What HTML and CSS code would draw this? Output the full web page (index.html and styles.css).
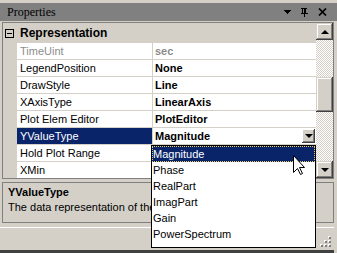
FILE: index.html
```html
<!DOCTYPE html>
<html>
  <head>
    <title>Properties</title>
    <meta name="viewport" content="width=device-width, initial-scale=1.0" />
    <link rel="stylesheet" href="styles.css">
  </head>
  <body>
    <div class="panel">
      <div class="titlebar">
        <span class="title">Properties</span>
        <span class="tools">
          <svg width="7" height="4" viewBox="0 0 7 4" shape-rendering="crispEdges"><path d="M0 0h7v1h-1v1h-1v1h-1v1h-1v-1h-1v-1h-1v-1h-1z" fill="#000"/></svg>
          <svg width="7" height="9" viewBox="0 0 7 9" shape-rendering="crispEdges"><path d="M1 0h5v1h-1v4h2v1h-3v3h-1v-3h-3v-1h1v-4h-1v-1h1zM2 1v4h1v-4z" fill="#000" fill-rule="evenodd"/></svg>
          <svg width="9" height="8" viewBox="0 0 9 8"><path d="M1 0.5L8 7.5M8 0.5L1 7.5" stroke="#000" stroke-width="1.7"/></svg>
        </span>
      </div>
      <div class="grid">
        <div class="rows">
          <div class="cat"><span class="toggle"></span>Representation</div>
          <div class="row readonly"><div class="name">TimeUint</div><div class="value">sec</div></div>
          <div class="row"><div class="name">LegendPosition</div><div class="value">None</div></div>
          <div class="row"><div class="name">DrawStyle</div><div class="value">Line</div></div>
          <div class="row"><div class="name">XAxisType</div><div class="value">LinearAxis</div></div>
          <div class="row"><div class="name">Plot Elem Editor</div><div class="value">PlotEditor</div></div>
          <div class="row selected">
            <div class="name">YValueType</div>
            <div class="value">Magnitude<span class="drop-btn"><i class="arrow down"></i></span></div>
          </div>
          <div class="row"><div class="name">Hold Plot Range</div><div class="value"></div></div>
          <div class="row"><div class="name">XMin</div><div class="value"></div></div>
        </div>
        <div class="vscroll">
          <div class="sbtn"><i class="arrow up"></i></div>
          <div class="track"><div class="thumb"></div></div>
          <div class="sbtn"><i class="arrow down"></i></div>
        </div>
      </div>
      <div class="desc">
        <h3>YValueType</h3>
        <p>The data representation of the Y value.</p>
      </div>
      <div class="status">
        <svg class="grip" width="12" height="12" viewBox="0 0 12 12" shape-rendering="crispEdges">
          <g fill="#fff"><rect x="8" y="0" width="2" height="2"/><rect x="4" y="4" width="2" height="2"/><rect x="8" y="4" width="2" height="2"/><rect x="0" y="8" width="2" height="2"/><rect x="4" y="8" width="2" height="2"/><rect x="8" y="8" width="2" height="2"/></g>
          <g fill="#808080"><rect x="9" y="1" width="2" height="2"/><rect x="5" y="5" width="2" height="2"/><rect x="9" y="5" width="2" height="2"/><rect x="1" y="9" width="2" height="2"/><rect x="5" y="9" width="2" height="2"/><rect x="9" y="9" width="2" height="2"/></g>
        </svg>
      </div>

      <ul class="dropdown">
        <li class="sel">Magnitude</li>
        <li>Phase</li>
        <li>RealPart</li>
        <li>ImagPart</li>
        <li>Gain</li>
        <li>PowerSpectrum</li>
      </ul>

      <svg class="cursor" width="13" height="21" viewBox="0 0 13 21">
        <path d="M0.5 0.5V17.5L4.5 13.5L7.5 19.5L9.5 18.5L6.5 12.5L11.5 12.5Z" fill="#fff" stroke="#000" stroke-width="1"/>
      </svg>
    </div>
  </body>
</html>
```

FILE: styles.css
```css
* {
  box-sizing: border-box;
}
body {
  margin: 0;
  background: #d4d0c8;
  font-family: "Liberation Sans", Arial, sans-serif;
  font-size: 11px;
  color: #000;
  overflow: hidden;
}
.panel {
  position: relative;
  width: 337px;
  height: 253px;
  padding-top: 3px;
  overflow: hidden;
}
.titlebar {
  display: flex;
  align-items: center;
  height: 18px;
  margin-bottom: 1px;
  padding: 0 10px 0 7px;
  background: #808080;
}
.title {
  flex: 1;
  font-family: "Liberation Serif", "Times New Roman", serif;
  font-size: 12px;
  padding-top: 1px;
}
.tools {
  display: flex;
  align-items: center;
  gap: 10px;
}
.tools svg {
  display: block;
}
.grid {
  display: flex;
  width: 332px;
  height: 157px;
  margin-left: 2px;
  border: 1px solid #808080;
}
.rows {
  width: 313px;
  height: 155px;
  overflow: hidden;
}
.cat {
  display: flex;
  align-items: center;
  height: 20px;
  font-size: 12px;
  font-weight: bold;
}
.toggle {
  display: flex;
  align-items: center;
  justify-content: center;
  width: 9px;
  height: 9px;
  margin: 0 6px 0 2px;
  border: 1px solid #000;
}
.toggle::after {
  content: "";
  width: 5px;
  height: 1px;
  background: #000;
}
.row {
  display: flex;
  height: 17px;
  border-bottom: 1px solid #d4d0c8;
  line-height: 16px;
}
.name {
  width: 136px;
  margin-left: 14px;
  padding-left: 3px;
  background: #fff;
  border-right: 1px solid #d4d0c8;
  white-space: nowrap;
}
.value {
  display: flex;
  align-items: center;
  flex: 1;
  padding-left: 2px;
  background: #fff;
  font-weight: bold;
}
.readonly .name,
.readonly .value {
  color: #8c8c8c;
}
.selected .name {
  background: #0a246a;
  color: #fff;
}
.drop-btn {
  display: flex;
  align-items: center;
  justify-content: center;
  width: 13px;
  height: 14px;
  margin-left: auto;
  margin-right: 1px;
  background: #d4d0c8;
  box-shadow: inset -1px -1px #404040, inset 1px 1px #fff, inset -2px -2px #808080;
}
.arrow {
  width: 0;
  height: 0;
  border-left: 4px solid transparent;
  border-right: 4px solid transparent;
}
.arrow.down {
  border-top: 4px solid #000;
}
.arrow.up {
  border-bottom: 4px solid #000;
}
.vscroll {
  display: flex;
  flex-direction: column;
  width: 17px;
}
.sbtn,
.thumb {
  display: flex;
  align-items: center;
  justify-content: center;
  width: 17px;
  height: 17px;
  background: #d4d0c8;
  box-shadow: inset -1px -1px #404040, inset 1px 1px #d4d0c8, inset -2px -2px #808080, inset 2px 2px #fff;
}
.track {
  flex: 1;
  padding-top: 37px;
  background: repeating-conic-gradient(#fff 0 25%, #d4d0c8 0 50%) 0 0 / 2px 2px;
}
.thumb {
  height: 35px;
}
.desc {
  width: 332px;
  height: 41px;
  margin: 3px 0 0 2px;
  padding: 2px 5px 0 5px;
  border: 1px solid #808080;
  white-space: nowrap;
  overflow: hidden;
}
.desc h3 {
  margin: 0;
  font-size: 11px;
  line-height: 15px;
}
.desc p {
  width: 143px;
  margin: 0;
  line-height: 15px;
  overflow: hidden;
}
.status {
  display: flex;
  align-items: flex-end;
  justify-content: flex-end;
  width: 334px;
  height: 26px;
  margin-top: 4px;
  padding: 0 2px 2px 0;
  border-top: 1px solid #fff;
  border-bottom: 3px solid #404040;
}
.grip {
  display: block;
}
.dropdown {
  position: absolute;
  left: 151px;
  top: 145px;
  width: 165px;
  height: 103px;
  margin: 0;
  padding: 0 0 5px;
  list-style: none;
  background: #fff;
  border: 1px solid #000;
}
.dropdown li {
  height: 16px;
  padding-left: 1px;
  line-height: 16px;
}
.dropdown li.sel {
  padding-left: 0;
  line-height: 14px;
  background: #0a246a;
  color: #fff;
  border: 1px dotted #e8c860;
}
.cursor {
  position: absolute;
  left: 293px;
  top: 155px;
}
```
